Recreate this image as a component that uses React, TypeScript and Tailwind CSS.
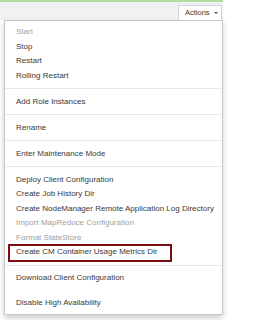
type Entry =
  | { kind: "item"; label: string; disabled?: boolean; marked?: boolean }
  | { kind: "divider" }
  | { kind: "gap" };

const entries: Entry[] = [
  { kind: "item", label: "Start", disabled: true },
  { kind: "item", label: "Stop" },
  { kind: "item", label: "Restart" },
  { kind: "item", label: "Rolling Restart" },
  { kind: "divider" },
  { kind: "item", label: "Add Role Instances" },
  { kind: "divider" },
  { kind: "item", label: "Rename" },
  { kind: "divider" },
  { kind: "item", label: "Enter Maintenance Mode" },
  { kind: "divider" },
  { kind: "item", label: "Deploy Client Configuration" },
  { kind: "item", label: "Create Job History Dir" },
  { kind: "item", label: "Create NodeManager Remote Application Log Directory" },
  { kind: "item", label: "Import MapReduce Configuration", disabled: true },
  { kind: "item", label: "Format StateStore", disabled: true },
  { kind: "item", label: "Create CM Container Usage Metrics Dir", marked: true },
  { kind: "divider" },
  { kind: "item", label: "Download Client Configuration" },
  { kind: "gap" },
  { kind: "item", label: "Disable High Availability" },
];

export default function App() {
  return (
    <div
      className="w-[261px] h-[320px] bg-white overflow-hidden"
      style={{ fontFamily: '"Liberation Sans", Arial, sans-serif' }}
    >
      <div className="w-[223px]">
        <div className="h-[20px] border-t-2 border-[#b5dca0] bg-[#f1f1f1] flex justify-end items-end">
          <button className="h-[15px] w-[44px] pl-[6px] mr-[1px] flex items-center gap-[4px] bg-white border border-b-0 border-[#d4d4d4] text-[7.5px] text-[#3a3a3a]">
            Actions
            <span className="w-0 h-0 border-l-[2px] border-r-[2px] border-t-[2px] border-l-transparent border-r-transparent border-t-[#555]" />
          </button>
        </div>
        <div className="ml-[4px] border border-[#c8c8c8] bg-white pt-[4px] pb-[3px] shadow-[0_3px_6px_rgba(0,0,0,0.2)]">
          {entries.map((e, i) =>
            e.kind === "divider" ? (
              <div key={i} className="h-px bg-[#e8e8e8] mt-[5px] mb-[5.5px]" />
            ) : e.kind === "gap" ? (
              <div key={i} className="h-[10.5px]" />
            ) : (
              <div
                key={i}
                className={`relative h-[14.5px] leading-[14.5px] pl-[11px] text-[8px] whitespace-nowrap ${
                  e.disabled ? "text-[#a0a0a0]" : "text-[#3a3a3a]"
                }`}
              >
                {e.label}
                {e.marked && (
                  <span className="absolute left-[3px] top-[-1.5px] w-[164px] h-[18px] border-2 border-[#7a0d12]" />
                )}
              </div>
            )
          )}
        </div>
      </div>
    </div>
  );
}
